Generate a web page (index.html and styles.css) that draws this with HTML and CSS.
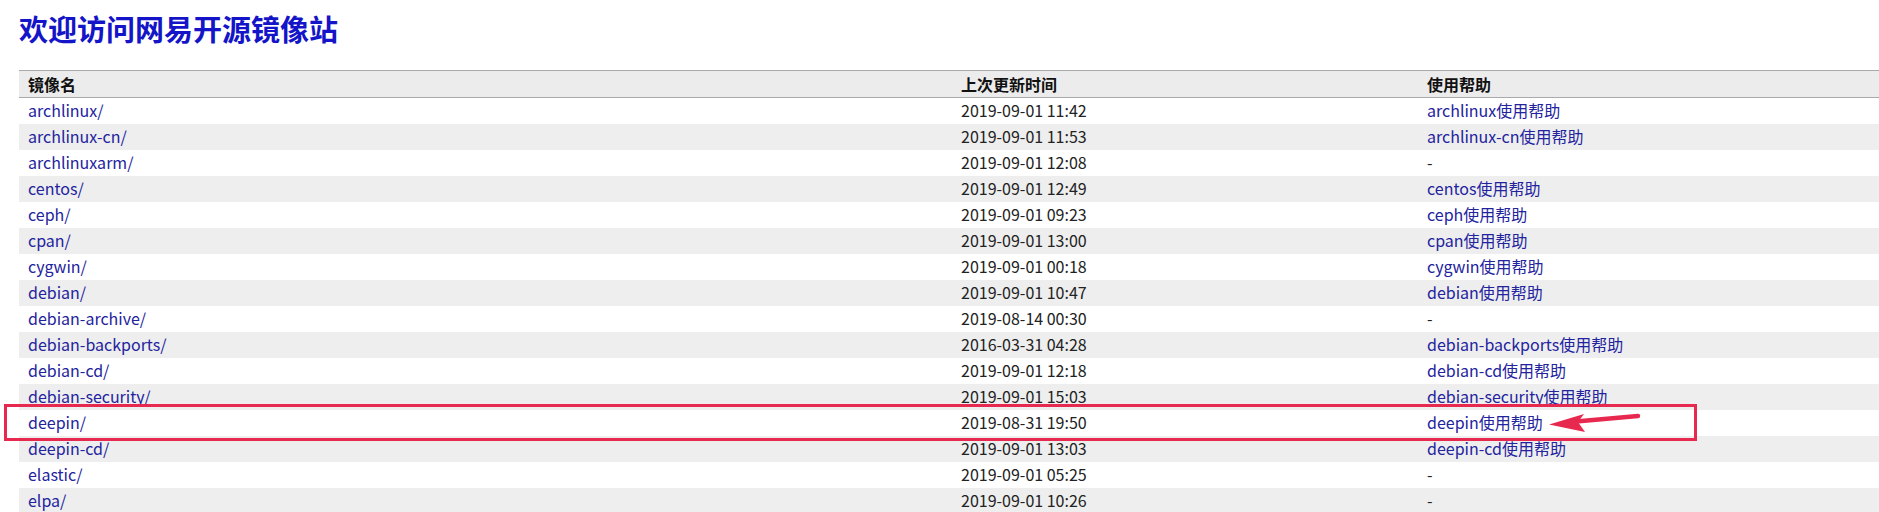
FILE: index.html
```html
<!DOCTYPE html>
<html lang="zh-CN">
<head>
    <meta charset="UTF-8">
    <title>欢迎访问网易开源镜像站</title>
    <link rel="stylesheet" href="styles.css">
</head>
<body>
    <div class="page">
        <h1>欢迎访问网易开源镜像站</h1>

        <table class="mirror-list">
            <thead>
                <tr>
                    <th class="col-name">镜像名</th>
                    <th class="col-time">上次更新时间</th>
                    <th class="col-help">使用帮助</th>
                </tr>
            </thead>
            <tbody>
                <tr><td><a href="#">archlinux/</a></td><td>2019-09-01 11:42</td><td><a href="#">archlinux使用帮助</a></td></tr>
                <tr><td><a href="#">archlinux-cn/</a></td><td>2019-09-01 11:53</td><td><a href="#">archlinux-cn使用帮助</a></td></tr>
                <tr><td><a href="#">archlinuxarm/</a></td><td>2019-09-01 12:08</td><td>-</td></tr>
                <tr><td><a href="#">centos/</a></td><td>2019-09-01 12:49</td><td><a href="#">centos使用帮助</a></td></tr>
                <tr><td><a href="#">ceph/</a></td><td>2019-09-01 09:23</td><td><a href="#">ceph使用帮助</a></td></tr>
                <tr><td><a href="#">cpan/</a></td><td>2019-09-01 13:00</td><td><a href="#">cpan使用帮助</a></td></tr>
                <tr><td><a href="#">cygwin/</a></td><td>2019-09-01 00:18</td><td><a href="#">cygwin使用帮助</a></td></tr>
                <tr><td><a href="#">debian/</a></td><td>2019-09-01 10:47</td><td><a href="#">debian使用帮助</a></td></tr>
                <tr><td><a href="#">debian-archive/</a></td><td>2019-08-14 00:30</td><td>-</td></tr>
                <tr><td><a href="#">debian-backports/</a></td><td>2016-03-31 04:28</td><td><a href="#">debian-backports使用帮助</a></td></tr>
                <tr><td><a href="#">debian-cd/</a></td><td>2019-09-01 12:18</td><td><a href="#">debian-cd使用帮助</a></td></tr>
                <tr><td><a href="#">debian-security/</a></td><td>2019-09-01 15:03</td><td><a href="#">debian-security使用帮助</a></td></tr>
                <tr><td><a href="#">deepin/</a></td><td>2019-08-31 19:50</td><td><a href="#">deepin使用帮助</a></td></tr>
                <tr><td><a href="#">deepin-cd/</a></td><td>2019-09-01 13:03</td><td><a href="#">deepin-cd使用帮助</a></td></tr>
                <tr><td><a href="#">elastic/</a></td><td>2019-09-01 05:25</td><td>-</td></tr>
                <tr><td><a href="#">elpa/</a></td><td>2019-09-01 10:26</td><td>-</td></tr>
            </tbody>
        </table>

        <!-- 标注：deepin 行 -->
        <div class="mark-box"></div>
        <svg class="mark-arrow" width="100" height="26" viewBox="0 0 100 26">
            <line x1="92" y1="6" x2="30" y2="11.6" stroke="#e8294f" stroke-width="4.5" stroke-linecap="round"/>
            <polygon points="3,14.5 38,4 32,12 39,22" fill="#e8294f"/>
        </svg>
    </div>
</body>
</html>
```

FILE: styles.css
```css
* {
    margin: 0;
    padding: 0;
    box-sizing: border-box;
}

body {
    font-family: 'Noto Sans CJK SC', 'Noto Sans', sans-serif;
    background: #fff;
    color: #222;
    overflow: hidden;
}

.page {
    position: relative;
    padding-left: 19px;
}

h1 {
    font-size: 29px;
    line-height: 36px;
    font-weight: bold;
    color: #1414c8;
    padding-top: 10px;
    margin-bottom: 24px;
}

.mirror-list {
    width: 1860px;
    border-collapse: collapse;
    table-layout: fixed;
    font-size: 16px;
}

.mirror-list th {
    text-align: left;
    font-weight: bold;
    color: #111;
    background: #ececec;
    height: 27px;
    padding: 0 9px 1px;
    border-top: 1px solid #a9a9a9;
    border-bottom: 1px solid #a9a9a9;
}

.mirror-list .col-name { width: 933px; }
.mirror-list .col-time { width: 466px; }
.mirror-list .col-help { width: 461px; }

.mirror-list td {
    height: 26px;
    padding: 0 9px 2px;
    line-height: 20px;
}

.mirror-list tbody tr:nth-child(even) {
    background: #eeeeee;
}

.mirror-list a {
    color: #23239e;
    text-decoration: none;
}

.mark-box {
    position: absolute;
    left: 4px;
    top: 404px;
    width: 1693px;
    height: 37px;
    border: 3px solid #e8294f;
}

.mark-arrow {
    position: absolute;
    left: 1546px;
    top: 410px;
}
```
